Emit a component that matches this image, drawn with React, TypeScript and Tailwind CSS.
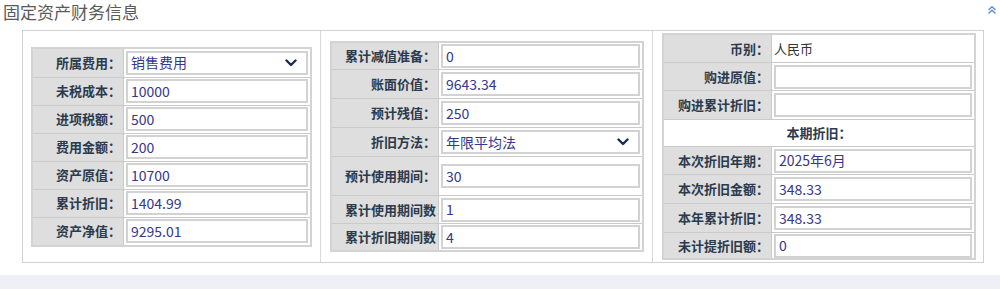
import React from 'react';

type Row = {
  label: string;
  value?: string;
  h: number;
  kind?: 'input' | 'select' | 'text' | 'header';
};

const panelOne: Row[] = [
  { label: '所属费用：', value: '销售费用', h: 28, kind: 'select' },
  { label: '未税成本：', value: '10000', h: 28 },
  { label: '进项税额：', value: '500', h: 28 },
  { label: '费用金额：', value: '200', h: 28 },
  { label: '资产原值：', value: '10700', h: 28 },
  { label: '累计折旧：', value: '1404.99', h: 28 },
  { label: '资产净值：', value: '9295.01', h: 28 },
];

const panelTwo: Row[] = [
  { label: '累计减值准备：', value: '0', h: 26 },
  { label: '账面价值：', value: '9643.34', h: 29 },
  { label: '预计残值：', value: '250', h: 29 },
  { label: '折旧方法：', value: '年限平均法', h: 29, kind: 'select' },
  { label: '预计使用期间：', value: '30', h: 39 },
  { label: '累计使用期间数', value: '1', h: 28 },
  { label: '累计折旧期间数', value: '4', h: 27 },
];

const panelThree: Row[] = [
  { label: '币别：', value: '人民币', h: 27, kind: 'text' },
  { label: '购进原值：', value: '', h: 28 },
  { label: '购进累计折旧：', value: '', h: 29 },
  { label: '本期折旧：', h: 27, kind: 'header' },
  { label: '本次折旧年期：', value: '2025年6月', h: 28 },
  { label: '本次折旧金额：', value: '348.33', h: 29 },
  { label: '本年累计折旧：', value: '348.33', h: 29 },
  { label: '未计提折旧额：', value: '0', h: 26 },
];

const Chevron = () => (
  <svg width="12" height="8" viewBox="0 0 12 8" className="shrink-0">
    <polyline points="1.5,1.5 6,6 10.5,1.5" fill="none" stroke="#1c2a55" strokeWidth="2.4" strokeLinecap="round" strokeLinejoin="round" />
  </svg>
);

const FormTable = ({ rows, labelWidth, width }: { rows: Row[]; labelWidth: number; width: number }) => (
  <div className="border-2 border-[#d3d3d3] bg-white" style={{ width }}>
    {rows.map((row, i) => {
      const top = i > 0 ? 'border-t border-[#cacaca]' : '';
      if (row.kind === 'header') {
        return (
          <div key={i} className={`${top} flex items-center justify-center font-bold text-[13px] text-[#2b3a4c]`} style={{ height: row.h }}>
            {row.label}
          </div>
        );
      }
      return (
        <div key={i} className={`${top} flex`} style={{ height: row.h }}>
          <div
            className="shrink-0 bg-[#dedede] border-r border-[#cacaca] flex items-center justify-end pr-[2px] font-bold text-[13px] text-[#2b3a4c] whitespace-nowrap"
            style={{ width: labelWidth }}
          >
            {row.label}
          </div>
          <div className="flex-1 flex items-center px-[2px]">
            {row.kind === 'text' ? (
              <span className="text-[13px] text-[#333]">{row.value}</span>
            ) : (
              <div className="w-full h-[24px] border-2 border-[#d2d2d2] flex items-center justify-between pl-[3px] pr-[9px] text-[14px] text-[#36368a]">
                <span>{row.value}</span>
                {row.kind === 'select' && <Chevron />}
              </div>
            )}
          </div>
        </div>
      );
    })}
  </div>
);

const App = () => {
  return (
    <div className="w-[1000px] h-[289px] bg-white overflow-hidden font-['Noto_Sans_CJK_SC','Noto_Sans',sans-serif]">
      <div className="h-[30px] flex items-start justify-between">
        <div className="pl-[3px] pt-[1px] text-[17px] leading-[22px] text-[#5a5a5a]">固定资产财务信息</div>
        <svg width="10" height="10" viewBox="0 0 10 10" className="mt-[5px] mr-[3px]">
          <polyline points="1.5,5 5,1.8 8.5,5" fill="none" stroke="#5b8fd6" strokeWidth="1.4" />
          <polyline points="1.5,8.5 5,5.3 8.5,8.5" fill="none" stroke="#5b8fd6" strokeWidth="1.4" />
        </svg>
      </div>

      <div className="ml-[22px] w-[962px] h-[233px] border border-[#d0d0d0] flex">
        <div className="w-[297px] flex items-center pl-[8px]">
          <FormTable rows={panelOne} labelWidth={91} width={281} />
        </div>
        <div className="w-[332px] border-l border-[#d8d8d8] flex items-center pl-[9px]">
          <FormTable rows={panelTwo} labelWidth={107} width={314} />
        </div>
        <div className="w-[331px] border-l border-[#d8d8d8] flex items-center pl-[9px]">
          <FormTable rows={panelThree} labelWidth={108} width={314} />
        </div>
      </div>

      <div className="mt-[12px] h-[14px] bg-[#eef0f6]" />
    </div>
  );
};

export default App;
